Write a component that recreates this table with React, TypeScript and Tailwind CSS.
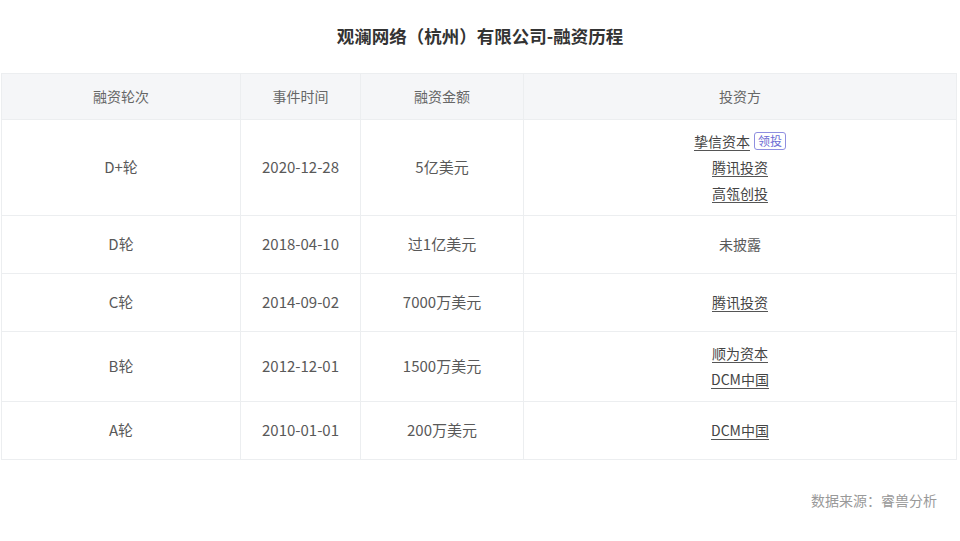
import React from 'react';

type Investor = { name: string; lead?: boolean; link?: boolean };
type Round = { round: string; date: string; amount: string; investors: Investor[] };

const rounds: Round[] = [
  {
    round: 'D+轮',
    date: '2020-12-28',
    amount: '5亿美元',
    investors: [
      { name: '挚信资本', lead: true, link: true },
      { name: '腾讯投资', link: true },
      { name: '高瓴创投', link: true },
    ],
  },
  { round: 'D轮', date: '2018-04-10', amount: '过1亿美元', investors: [{ name: '未披露' }] },
  { round: 'C轮', date: '2014-09-02', amount: '7000万美元', investors: [{ name: '腾讯投资', link: true }] },
  {
    round: 'B轮',
    date: '2012-12-01',
    amount: '1500万美元',
    investors: [
      { name: '顺为资本', link: true },
      { name: 'DCM中国', link: true },
    ],
  },
  { round: 'A轮', date: '2010-01-01', amount: '200万美元', investors: [{ name: 'DCM中国', link: true }] },
];

const cols = 'grid grid-cols-[239px_120px_163px_1fr]';

export default function App() {
  return (
    <main
      className="w-[960px] h-[541px] bg-white flex flex-col"
      style={{ fontFamily: '"Noto Sans CJK SC", "Noto Sans", sans-serif' }}
    >
      <h1 className="pt-[23px] h-[73px] text-center text-[17.5px] font-bold text-[#333]">
        观澜网络（杭州）有限公司-融资历程
      </h1>

      <div className="ml-[1px] w-[956px] border border-[#eceef0]">
        <div className={`${cols} h-[45px] bg-[#f5f6f8] text-[14px] text-[#666]`}>
          <div className="flex items-center justify-center border-r border-[#eceef0]">融资轮次</div>
          <div className="flex items-center justify-center border-r border-[#eceef0]">事件时间</div>
          <div className="flex items-center justify-center border-r border-[#eceef0]">融资金额</div>
          <div className="flex items-center justify-center">投资方</div>
        </div>

        {rounds.map((r) => (
          <div key={r.round} className={`${cols} min-h-[58px] border-t border-[#eceef0] text-[15px] text-[#595959]`}>
            <div className="flex items-center justify-center border-r border-[#eceef0]">{r.round}</div>
            <div className="flex items-center justify-center border-r border-[#eceef0]">{r.date}</div>
            <div className="flex items-center justify-center border-r border-[#eceef0]">{r.amount}</div>
            <div className="flex flex-col items-center justify-center pt-[8px] pb-[9px] text-[14px]">
              {r.investors.map((inv) => (
                <div key={inv.name} className="h-[26px] flex items-center gap-[4px]">
                  <span className={inv.link ? 'underline underline-offset-[3px] text-[#444] decoration-[#555]' : ''}>
                    {inv.name}
                  </span>
                  {inv.lead && (
                    <span className="px-[3px] leading-[16px] text-[12px] text-[#6c6cd4] border border-[#8f8fe0] rounded-[3px]">
                      领投
                    </span>
                  )}
                </div>
              ))}
            </div>
          </div>
        ))}
      </div>

      <div className="mt-[30px] pr-[23px] text-right text-[14px] text-[#999]">数据来源：睿兽分析</div>
    </main>
  );
}
